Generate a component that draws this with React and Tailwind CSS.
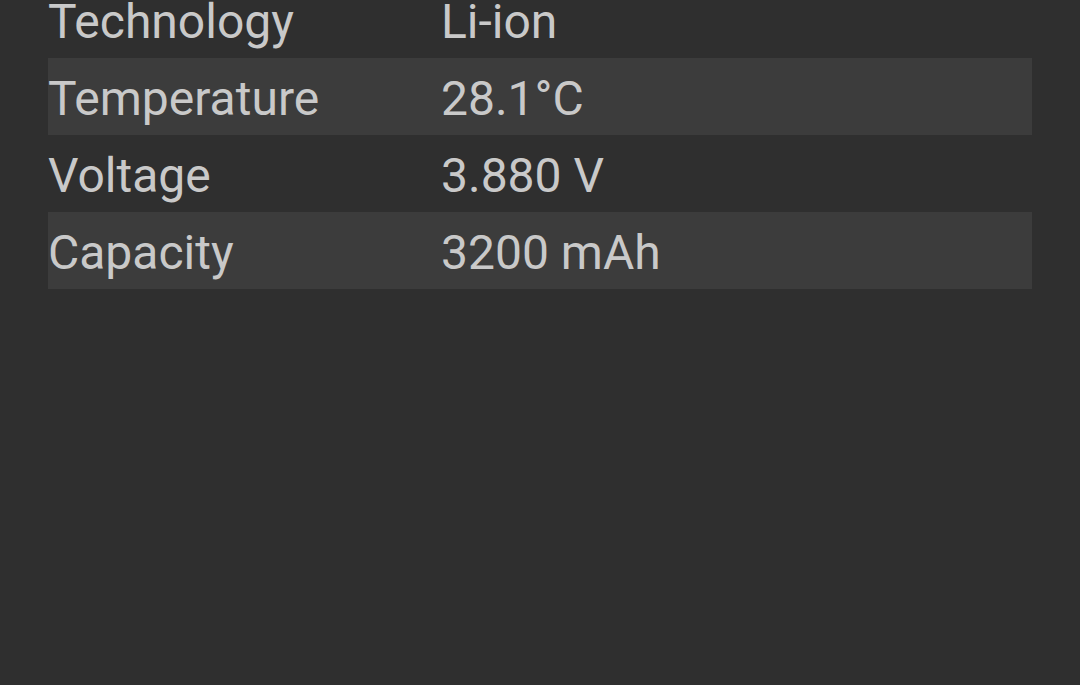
const rows = [
  ['Technology', 'Li-ion'],
  ['Temperature', '28.1°C'],
  ['Voltage', '3.880 V'],
  ['Capacity', '3200 mAh'],
];

export default function App() {
  return (
    <div className="h-[685px] w-[1080px] overflow-hidden bg-[#2f2f2f] font-['Roboto',sans-serif] text-[#c9c9c9]">
      <div className="mx-[48px] mt-[-19px]">
        {rows.map(([label, value], i) => (
          <div key={label} className={`flex h-[77px] items-center pt-[4px] ${i % 2 === 1 ? 'bg-[#3c3c3c]' : ''}`}>
            <span className="w-[393px] text-[48px] leading-none">{label}</span>
            <span className="text-[48px] leading-none">{value}</span>
          </div>
        ))}
      </div>
    </div>
  );
}
